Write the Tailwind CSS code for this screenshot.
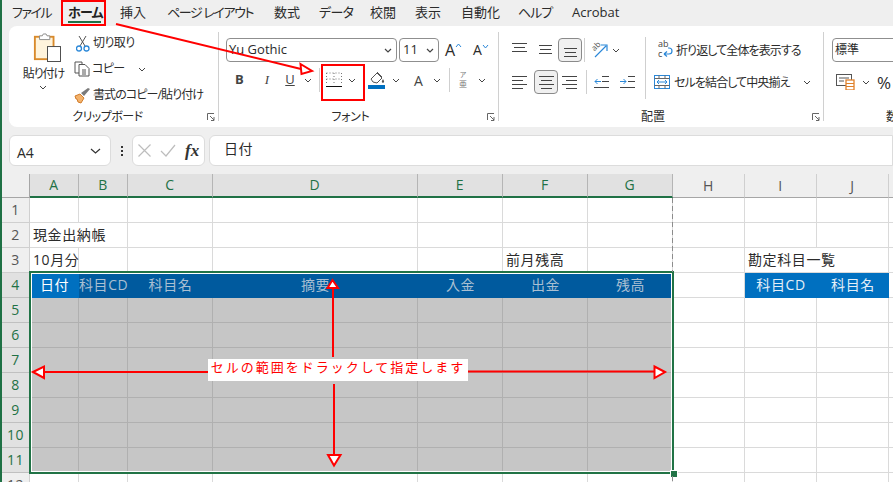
<!DOCTYPE html>
<html lang="ja">
<head>
<meta charset="UTF-8">
<title>現金出納帳 - Excel</title>
<script src="https://cdn.jsdelivr.net/npm/@tailwindcss/browser@4"></script>
</head>
<body class="bg-[#efefef]">
<div class="relative w-[893px] h-[482px] overflow-hidden font-['Open_Sans','Noto_Sans_CJK_JP',sans-serif] text-[#2b2b2b] [font-feature-settings:'palt']">
  <div class="h-full border-l-2 border-[#1f7145] flex flex-col">

    <!-- menu -->
    <nav class="h-[26px] shrink-0 flex items-center pl-[10px] text-[13px] bg-[#efefef] whitespace-nowrap">
      <span class="w-[50px] tracking-[-1.500px]">ファイル</span>
      <span class="w-[58px] font-bold text-[#222] relative pl-[6px] h-full flex items-center tracking-[-0.800px]">ホーム<i class="absolute left-[6px] bottom-[3px] w-[33px] h-[2px] bg-[#1f7145]"></i></span>
      <span class="w-[47px]">挿入</span>
      <span class="w-[107px] tracking-[-1.400px]">ページ レイアウト</span>
      <span class="w-[45px]">数式</span>
      <span class="w-[51px] tracking-[-0.700px]">データ</span>
      <span class="w-[45px]">校閲</span>
      <span class="w-[46px]">表示</span>
      <span class="w-[57px]">自動化</span>
      <span class="w-[54px] tracking-[-1px]">ヘルプ</span>
      <span>Acrobat</span>
    </nav>

    <!-- ribbon -->
    <div class="h-[101px] shrink-0 ml-[7px] bg-white rounded-l-lg flex text-[12px]">

      <!-- clipboard -->
      <section class="w-[210px] h-[89px] mt-[6px] flex flex-col border-r border-[#d0d0d0] relative">
        <div class="h-[78px] shrink-0 flex">
          <div class="w-[64px] flex flex-col items-center pl-[11px]">
            <svg width="28" height="31" viewBox="0 0 30 31"><rect x="2" y="4" width="20" height="24" fill="#fff4dc" stroke="#d98a2b" stroke-width="2"/><path d="M7 7V3h3l1-2h3l1 2h3v4z" fill="#fff" stroke="#8a8a8a"/><rect x="15.500" y="14.500" width="14" height="16" fill="#fff" stroke="#444"/></svg>
            <span class="mt-[4px] leading-[14px] tracking-[-1px] whitespace-nowrap pr-[6px]">貼り付け</span>
            <svg class="mt-[4px] mr-[7px]" width="8" height="5" viewBox="0 0 8 5"><path d="M1 1l3 3 3-3" fill="none" stroke="#444"/></svg>
          </div>
          <div class="flex flex-col -mt-[2px]">
            <div class="h-[26px] flex items-center pl-[3px] tracking-[-0.600px]">
              <svg width="15" height="17" viewBox="0 0 15 17"><path d="M3 1l6 10M10 1L4 11" stroke="#555" fill="none"/><circle cx="3" cy="13.500" r="2.500" fill="none" stroke="#2b88d8" stroke-width="1.300"/><circle cx="10.500" cy="13.500" r="2.500" fill="none" stroke="#2b88d8" stroke-width="1.300"/></svg>
              <span class="ml-[2px]">切り取り</span>
            </div>
            <div class="h-[26px] flex items-center pl-[1px] tracking-[-0.600px]">
              <svg width="17" height="16" viewBox="0 0 17 16"><path d="M5 12H1V1h7v2" fill="none" stroke="#555"/><path d="M5 3.500h6l4 4V15H5z" fill="#fff" stroke="#555"/><path d="M8 9h4M8 11h4M8 13h4" stroke="#555"/></svg>
              <span class="ml-[1px]">コピー</span>
              <svg class="ml-[13px]" width="8" height="5" viewBox="0 0 8 5"><path d="M1 1l3 3 3-3" fill="none" stroke="#444"/></svg>
            </div>
            <div class="h-[26px] flex items-center pl-[1px] tracking-[-0.900px]">
              <svg width="17" height="17" viewBox="0 0 17 17"><path d="M1 9l5-2 4 4-3 5-3-1-1-3-1 0z" fill="#f3b26b" stroke="#d27d2c"/><path d="M7 6l3 3 6-7-2-1z" fill="#7a7a7a"/></svg>
              <span class="ml-[2px] whitespace-nowrap">書式のコピー/貼り付け</span>
            </div>
          </div>
        </div>
        <div class="h-[14px] shrink-0 flex items-center justify-center pr-[12px] relative leading-[14px]">
          <span class="tracking-[-0.500px]">クリップボード</span>
          <svg class="absolute right-[3px] top-[3px]" width="8" height="8" viewBox="0 0 8 8"><path d="M.5 7V.5H7M3 3l4 4M7 4v3.500H4" fill="none" stroke="#666"/></svg>
        </div>
      </section>

      <!-- font -->
      <section class="w-[280px] h-[89px] mt-[6px] flex flex-col border-r border-[#d0d0d0] relative">
        <div class="h-[78px] shrink-0 flex flex-col">
          <div class="flex items-center h-[24px] mt-[6px] pl-[7px]">
            <div class="w-[171px] h-[24px] border border-[#8f8f8f] rounded-[4px] flex items-center justify-between pl-[2px] pr-[4px] text-[13px]">Yu Gothic<svg width="8" height="5" viewBox="0 0 8 5"><path d="M1 1l3 3 3-3" fill="none" stroke="#444" stroke-width="1.200"/></svg></div>
            <div class="w-[40px] h-[24px] ml-[2px] border border-[#8f8f8f] rounded-[4px] flex items-center justify-between pl-[3px] pr-[4px] text-[13px]">11<svg width="8" height="5" viewBox="0 0 8 5"><path d="M1 1l3 3 3-3" fill="none" stroke="#444" stroke-width="1.200"/></svg></div>
            <span class="ml-[6px] w-[28px] text-[16px] leading-none flex">A<svg class="mt-[1px]" width="7" height="5" viewBox="0 0 7 5"><path d="M1 4l2.500-3L6 4" fill="none" stroke="#2b88d8"/></svg></span>
            <span class="text-[14px] leading-none flex">A<svg class="mt-[1px]" width="7" height="5" viewBox="0 0 7 5"><path d="M1 1l2.500 3L6 1" fill="none" stroke="#2b88d8"/></svg></span>
          </div>
          <div class="flex items-center h-[24px] mt-[6px] text-[#444]">
            <span class="ml-[16px] w-[19px] font-bold text-[13px]">B</span>
            <span class="w-[26px] text-center italic text-[13px] font-['Liberation_Serif']">I</span>
            <span class="w-[20px] text-center underline text-[13px]">U</span>
            <svg class="ml-[4px]" width="8" height="5" viewBox="0 0 8 5"><path d="M1 1l3 3 3-3" fill="none" stroke="#444"/></svg>
            <i class="ml-[7px] w-px h-[24px] bg-[#cfcfcf]"></i>
            <svg class="ml-[6px]" width="16" height="16" viewBox="0 0 16 16"><path d="M.5 1h15M.5 1v12M15.500 1v12M8 1v12M.5 7h15" stroke="#777" stroke-dasharray="1 2" fill="none"/><path d="M0 14.500h16" stroke="#111"/></svg>
            <svg class="ml-[6px]" width="8" height="5" viewBox="0 0 8 5"><path d="M1 1l3 3 3-3" fill="none" stroke="#444"/></svg>
            <svg class="ml-[12px]" width="18" height="20" viewBox="0 0 18 20"><path d="M3 9l6-6 5 5-5 5-4-1z" fill="#fff" stroke="#555"/><path d="M9 2l5 5" stroke="#555"/><path d="M15 9c1 2 2 3 0 4-2-1-1-2 0-4z" fill="#555"/><rect x="0" y="15" width="17" height="4" fill="#0070c0"/></svg>
            <svg class="ml-[6px]" width="8" height="5" viewBox="0 0 8 5"><path d="M1 1l3 3 3-3" fill="none" stroke="#444"/></svg>
            <span class="ml-[14px] w-[16px] text-[14px]">A</span>
            <svg class="ml-[3px]" width="8" height="5" viewBox="0 0 8 5"><path d="M1 1l3 3 3-3" fill="none" stroke="#444"/></svg>
            <i class="ml-[8px] w-px h-[24px] bg-[#cfcfcf]"></i>
            <span class="ml-[7px] w-[12px] flex flex-col items-center text-[#777]"><span class="text-[7px] leading-[8px]">ア</span><span class="text-[8px] leading-[10px]">亜</span></span>
            <svg class="ml-[9px]" width="8" height="5" viewBox="0 0 8 5"><path d="M1 1l3 3 3-3" fill="none" stroke="#444"/></svg>
          </div>
        </div>
        <div class="h-[14px] shrink-0 flex items-center justify-center pr-[16px] relative leading-[14px]">
          <span class="tracking-[-0.300px]">フォント</span>
          <svg class="absolute right-[3px] top-[3px]" width="8" height="8" viewBox="0 0 8 8"><path d="M.5 7V.5H7M3 3l4 4M7 4v3.500H4" fill="none" stroke="#666"/></svg>
        </div>
      </section>

      <!-- alignment -->
      <section class="w-[325px] h-[89px] mt-[6px] flex flex-col border-r border-[#d0d0d0] relative">
        <div class="h-[78px] shrink-0 flex">
          <div class="w-[146px] flex flex-col">
            <div class="h-[24px] mt-[6px] flex items-center pl-[13px]">
              <svg class="-mt-[5px]" width="15" height="10" viewBox="0 0 15 10"><path d="M0 .5h15M2 4.500h11M0 8.500h15" stroke="#444"/></svg>
              <svg class="ml-[11px]" width="15" height="10" viewBox="0 0 15 10"><path d="M1 .5h13M2 4.500h11M1 8.500h13" stroke="#444"/></svg>
              <div class="ml-[5px] w-[24px] h-[24px] border border-[#8a8a8a] rounded-[4px] bg-[#f0f0f0] flex items-end justify-center pb-[3px]"><svg width="15" height="10" viewBox="0 0 15 10"><path d="M1 .5h13M2 4.500h11M1 8.500h13" stroke="#444"/></svg></div>
              <i class="ml-[2px] w-px h-[24px] bg-[#cfcfcf]"></i>
              <span class="ml-[6px] w-[17px] h-[17px] relative">
                <span class="absolute left-0 top-0 text-[8px] leading-[8px] -rotate-45 text-[#555]">ab</span>
                <svg class="absolute left-0 top-0" width="17" height="17" viewBox="0 0 17 17"><path d="M4 15L15 4M10 3h6v6" fill="none" stroke="#2b88d8" stroke-width="1.200"/></svg>
              </span>
              <svg class="ml-[4px]" width="8" height="5" viewBox="0 0 8 5"><path d="M1 1l3 3 3-3" fill="none" stroke="#444"/></svg>
            </div>
            <div class="h-[24px] mt-[8px] flex items-center pl-[13px]">
              <svg width="15" height="13" viewBox="0 0 15 13"><path d="M0 .5h15M0 4.500h11M0 8.500h15M0 12.500h11" stroke="#444"/></svg>
              <div class="ml-[7px] w-[24px] h-[24px] border border-[#8a8a8a] rounded-[4px] bg-[#f0f0f0] flex items-center justify-center"><svg width="15" height="13" viewBox="0 0 15 13"><path d="M0 .5h15M2 4.500h11M0 8.500h15M2 12.500h11" stroke="#444"/></svg></div>
              <svg class="ml-[4px]" width="15" height="13" viewBox="0 0 15 13"><path d="M0 .5h15M4 4.500h11M0 8.500h15M4 12.500h11" stroke="#444"/></svg>
              <i class="ml-[9px] w-px h-[24px] bg-[#cfcfcf]"></i>
              <svg class="ml-[7px]" width="15" height="12" viewBox="0 0 15 12"><path d="M8 .5h7M8 5.500h7M0 11.500h15" stroke="#444"/><path d="M7 5.500H1M3.500 3L1 5.500 3.500 8" fill="none" stroke="#2b88d8"/></svg>
              <svg class="ml-[11px]" width="15" height="12" viewBox="0 0 15 12"><path d="M8 .5h7M8 5.500h7M0 11.500h15" stroke="#444"/><path d="M0 5.500h6M3.500 3L6 5.500 3.500 8" fill="none" stroke="#2b88d8"/></svg>
            </div>
          </div>
          <i class="w-px h-[62px] mt-[5px] bg-[#cfcfcf]"></i>
          <div class="flex flex-col">
            <div class="h-[24px] mt-[6px] flex items-center pl-[12px] whitespace-nowrap">
              <span class="w-[15px] h-[18px] relative">
                <span class="absolute left-0 -top-[2px] text-[9px] leading-[9px] text-[#444]">ab</span>
                <span class="absolute left-0 top-[8px] text-[9px] leading-[9px] text-[#444]">c</span>
                <svg class="absolute left-0 top-0" width="15" height="18" viewBox="0 0 15 18"><path d="M6 13h5c4 0 4-6 0-6h-1M6 13l3-2.500M6 13l3 2.500" fill="none" stroke="#2b88d8" stroke-width="1.200"/></svg>
              </span>
              <span class="ml-[3px] pt-[2px] tracking-[-0.900px]">折り返して全体を表示する</span>
            </div>
            <div class="h-[24px] mt-[8px] flex items-center pl-[8px] whitespace-nowrap">
              <svg width="16" height="14" viewBox="0 0 16 14"><rect x=".5" y=".5" width="15" height="13" fill="none" stroke="#2b88d8"/><path d="M5 .5v3M11 .5v3M5 10.500v3M11 10.500v3M.5 3.500h15M.5 10.500h15" stroke="#666"/><path d="M3 7h10M5 5L3 7l2 2M11 5l2 2-2 2" fill="none" stroke="#2b88d8"/></svg>
              <span class="ml-[4px] pt-[2px] tracking-[-0.900px]">セルを結合して中央揃え</span>
              <svg class="ml-[13px]" width="8" height="5" viewBox="0 0 8 5"><path d="M1 1l3 3 3-3" fill="none" stroke="#444"/></svg>
            </div>
          </div>
        </div>
        <div class="h-[14px] shrink-0 flex items-center justify-center pr-[16px] relative leading-[14px]">
          <span>配置</span>
          <svg class="absolute right-[3px] top-[3px]" width="8" height="8" viewBox="0 0 8 8"><path d="M.5 7V.5H7M3 3l4 4M7 4v3.500H4" fill="none" stroke="#666"/></svg>
        </div>
      </section>

      <!-- number, cut off by the window -->
      <section class="flex-1 min-w-0 h-[101px] mt-[6px] overflow-hidden whitespace-nowrap">
        <div class="h-[24px] mt-[6px] ml-[8px] w-[80px] border border-[#8f8f8f] rounded-[4px] flex items-center pl-[2px]">標準</div>
        <div class="h-[24px] mt-[8px] ml-[12px] flex items-center">
          <svg width="22" height="16" viewBox="0 0 22 16"><rect x=".5" y=".5" width="15" height="11" fill="none" stroke="#555"/><path d="M3 4h10M3 7h5" stroke="#555"/><rect x="10" y="6" width="8" height="10" fill="#fff" stroke="#e0812b" stroke-width="1.300"/><path d="M10 9.500h8M10 12.500h8" stroke="#e0812b"/></svg>
          <svg class="ml-[4px]" width="8" height="5" viewBox="0 0 8 5"><path d="M1 1l3 3 3-3" fill="none" stroke="#444"/></svg>
          <span class="ml-[7px] text-[17px] leading-none">%</span>
        </div>
        <div class="mt-[16px] pl-[62px] leading-[14px]">数</div>
      </section>
    </div>

    <!-- formula bar -->
    <div class="h-[47px] shrink-0 pt-[8px] pl-[7px] flex items-start">
      <div class="w-[102px] h-[31px] bg-white border border-[#dcdcdc] rounded-[6px] flex items-center justify-between pl-[7px] pr-[9px] text-[14px]"><span class="pt-[3px]">A4</span><svg width="11" height="6" viewBox="0 0 11 6"><path d="M1 1l4.500 4L10 1" fill="none" stroke="#333" stroke-width="1.200"/></svg></div>
      <div class="w-[21px] h-[31px] flex flex-col items-center justify-center gap-[2px]"><i class="w-[2px] h-[2px] bg-[#333]"></i><i class="w-[2px] h-[2px] bg-[#333]"></i><i class="w-[2px] h-[2px] bg-[#333]"></i></div>
      <div class="w-[73px] h-[31px] bg-white border border-[#dcdcdc] rounded-[6px] flex items-center pl-[5px]">
        <svg width="13" height="13" viewBox="0 0 13 13"><path d="M.5 .5l12 12M12.500 .5l-12 12" stroke="#bdbdbd" stroke-width="1.200"/></svg>
        <svg class="ml-[9px]" width="16" height="13" viewBox="0 0 16 13"><path d="M1 7l5 5L15 1" fill="none" stroke="#bdbdbd" stroke-width="1.200"/></svg>
        <span class="ml-[9px] font-['Liberation_Serif'] italic font-bold text-[17px] leading-none text-[#333]">fx</span>
      </div>
      <div class="ml-[4px] flex-1 h-[31px] bg-white border border-[#dcdcdc] rounded-l-[6px] flex items-center pl-[14px] pb-[4px] text-[14px] tracking-[0.500px] [font-feature-settings:normal]">日付</div>
    </div>

    <!-- sheet: filled in by the script below -->
    <div id="sheet" class="relative flex-1 min-h-0 overflow-hidden grid grid-cols-[28px_49px_49px_85px_205px_85px_85px_85px_72px_72px_72px_10px] grid-rows-[24px_repeat(12,25px)] bg-white text-[14px] tracking-[0.6px] [font-feature-settings:normal]"></div>
  </div>

  <!-- annotations -->
  <svg class="absolute inset-0 pointer-events-none" width="893" height="482" viewBox="0 0 893 482">
    <path d="M672.500 198V272M672.500 476V482" stroke="#8c8c8c" stroke-dasharray="5 3" fill="none"/>
    <rect x="62" y="1" width="43" height="24" fill="none" stroke="#f00" stroke-width="2"/>
    <rect x="322" y="65" width="42" height="35" fill="none" stroke="#f00" stroke-width="2"/>
    <path d="M116 24L301 69" stroke="#f00" stroke-width="2"/>
    <path d="M300.500 64L312 71L301.500 74Z" fill="#fff" stroke="#f00" stroke-width="2"/>
    <path d="M333 288V357M334 384V455" stroke="#f00" stroke-width="2"/>
    <path d="M332.500 280L327.500 288H338Z" fill="#fff" stroke="#f00" stroke-width="2"/>
    <path d="M334 465.500L328 455H340.500Z" fill="#fff" stroke="#f00" stroke-width="2"/>
    <path d="M44 372H208M468 371.500H655" stroke="#f00" stroke-width="2"/>
    <path d="M33 372L44 366.500V378Z" fill="#fff" stroke="#f00" stroke-width="2"/>
    <path d="M665 372L654.500 366.500V378Z" fill="#fff" stroke="#f00" stroke-width="2"/>
  </svg>
  <div class="absolute left-[208px] top-[359px] w-[260px] h-[22px] bg-white text-[#f00] text-[13px] leading-[16px] tracking-[2px] text-center whitespace-nowrap [font-feature-settings:normal]">セルの範囲をドラックして指定します</div>
</div>

<script>
  // columns with a letter, rows 1 to 12; A to G and rows 4 to 11 are the selection
  const sheet = document.getElementById('sheet');
  const letters = ['A','B','C','D','E','F','G','H','I','J','K'];
  const headers = { 0:'日付', 1:'科目CD', 2:'科目名', 3:'摘要', 4:'入金', 5:'出金', 6:'残高', 8:'科目CD', 9:'科目名' };

  function add(cls, text, span) {
    const d = document.createElement('div');
    d.className = cls;
    if (text) d.textContent = text;
    if (span) d.style.gridColumn = 'span ' + span;
    sheet.appendChild(d);
  }

  add('bg-[#efefef] border-b border-r border-[#a6a6a6] relative overflow-hidden');
  letters.forEach((l, i) => {
    if (i < 7) {
      add('bg-[#e1e1e1] text-[#1f7145] border-r border-[#b5b5b5] border-b-2 border-b-[#1f7145] flex items-center justify-center pb-[1px]', l);
    } else {
      add('bg-[#efefef] text-[#555] border-r border-[#cfcfcf] border-b border-b-[#a6a6a6] flex items-center justify-center pb-[1px]', i < 10 ? l : '');
    }
  });

  for (let r = 1; r <= 12; r++) {
    const sel = r >= 4 && r <= 11;
    add(sel
      ? 'bg-[#e1e1e1] text-[#1f7145] border-r border-b border-[#c0c0c0] flex items-center justify-center pb-[1px]'
      : 'bg-[#efefef] text-[#555] border-r border-b border-[#cfcfcf] flex items-center justify-center pb-[1px]', String(r));

    for (let c = 0; c < 11; c++) {
      if (r === 2 && c === 0) { add('border-r border-b border-[#dadada] pl-[3px] whitespace-nowrap leading-[24px]', '現金出納帳', 2); c++; continue; }
      if (r === 3 && c === 0) { add('border-r border-b border-[#dadada] pl-[3px] whitespace-nowrap leading-[24px]', '10月分'); continue; }
      if (r === 3 && c === 5) { add('border-r border-b border-[#dadada] pl-[3px] whitespace-nowrap leading-[24px]', '前月残高'); continue; }
      if (r === 3 && c === 8) { add('border-r border-b border-[#dadada] pl-[3px] whitespace-nowrap leading-[24px]', '勘定科目一覧', 2); c++; continue; }
      if (r === 4 && c === 0) { add('bg-[#0070c0] text-white text-center leading-[23px] whitespace-nowrap', headers[c]); continue; }
      if (r === 4 && c < 7) { add('bg-[#005a9e] text-[#a9bfd2] text-center leading-[23px] whitespace-nowrap', headers[c]); continue; }
      if (r === 4 && (c === 8 || c === 9)) { add('bg-[#0070c0] text-[#e4eef7] text-center leading-[23px] whitespace-nowrap', headers[c]); continue; }
      if (sel && c < 7) { add('bg-[#c6c6c6] border-r border-b border-[#b0b0b0]'); continue; }
      add('border-r border-b border-[#dadada]');
    }
  }

  // selection frame and its fill handle, over the cells
  add('absolute left-[27px] top-[97px] w-[645px] h-[203px] border-2 border-[#217346] shadow-[inset_0_0_0_1px_white] pointer-events-none');
  add('absolute left-[668px] top-[296px] w-[6px] h-[6px] bg-[#217346] border border-white box-content pointer-events-none');
</script>
</body>
</html>
